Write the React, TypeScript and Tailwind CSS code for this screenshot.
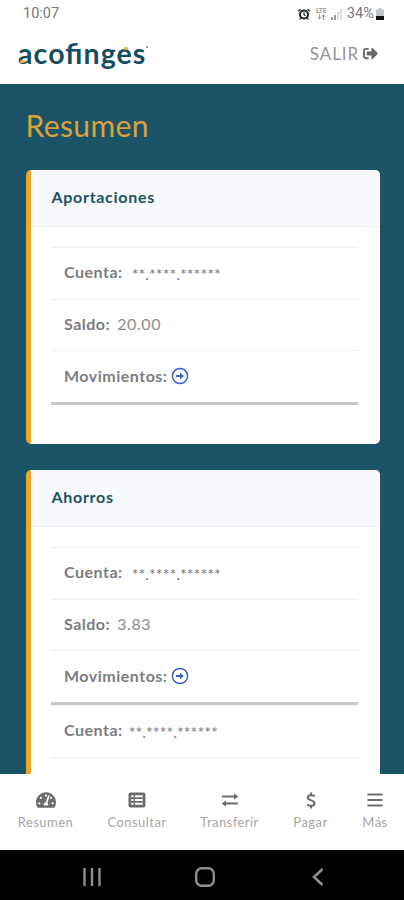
import type { ReactNode } from "react";
import { FaSignOutAlt, FaTachometerAlt } from "react-icons/fa";

type Item = { cuenta: string; saldo?: string };

const accounts: { title: string; items: Item[] }[] = [
  {
    title: "Aportaciones",
    items: [{ cuenta: "**.****.******", saldo: "20.00" }],
  },
  {
    title: "Ahorros",
    items: [{ cuenta: "**.****.******", saldo: "3.83" }, { cuenta: "**.****.******" }],
  },
];

const tabs = [
  { label: "Resumen", width: "w-[57px]", icon: <FaTachometerAlt className="w-5 h-[18px]" /> },
  { label: "Consultar", width: "w-[59px]", icon: <ListIcon /> },
  { label: "Transferir", width: "w-[59px]", icon: <ExchangeIcon /> },
  { label: "Pagar", width: "w-[36px]", icon: <DollarIcon /> },
  { label: "Más", width: "w-[26px]", icon: <MenuIcon /> },
];

function ListIcon() {
  return (
    <svg viewBox="0 0 18 16" className="w-[18px] h-4">
      <rect x="0.5" y="0.5" width="17" height="15" rx="2" fill="currentColor" />
      <path d="M3.2 4.2h2.4M3.2 8h2.4M3.2 11.8h2.4M7 4.2h7.8M7 8h7.8M7 11.8h7.8" stroke="#fff" strokeWidth="2" />
    </svg>
  );
}

function ExchangeIcon() {
  return (
    <svg viewBox="0 0 18 16" className="w-[18px] h-4" fill="none" stroke="currentColor" strokeWidth="1.9">
      <path d="M1 4.5h13M17 11.5H4" />
      <path d="M13 1.2v6.6l4.2-3.3zM5 8.2v6.6L.8 11.5z" fill="currentColor" stroke="none" />
    </svg>
  );
}

function DollarIcon() {
  return (
    <svg viewBox="0 0 10 17" className="w-2.5 h-[17px]" fill="none" stroke="currentColor" strokeWidth="2">
      <path d="M5 .5v3M5 13.5v3" />
      <path d="M8.7 4.2C7.6 3.5 6.3 3.2 5 3.2c-1.9 0-3.2.9-3.2 2.4C1.8 9 8.6 7.8 8.6 11.3c0 1.5-1.4 2.5-3.5 2.5-1.5 0-2.9-.4-4-1.2" />
    </svg>
  );
}

function MenuIcon() {
  return (
    <svg viewBox="0 0 16 14" className="w-4 h-3.5" stroke="currentColor" strokeWidth="2">
      <path d="M.5 1.5h15M.5 7h15M.5 12.5h15" />
    </svg>
  );
}

function ArrowCircle() {
  return (
    <svg viewBox="0 0 18 18" className="w-[18px] h-[18px] text-[#3c62cc]" fill="none" stroke="currentColor" strokeWidth="1.5">
      <circle cx="9" cy="9" r="7.6" />
      <path d="M5 9h5" strokeWidth="2" />
      <path d="M9 5.6v6.8L12.8 9z" fill="currentColor" stroke="none" />
    </svg>
  );
}

function StatusBar() {
  return (
    <div className="h-[26px] pt-0.5 pl-[23px] pr-[20px] flex items-center justify-between text-[#777]">
      <span className="text-[14.5px] font-['Roboto',sans-serif]">10:07</span>
      <div className="flex items-center">
        <svg viewBox="0 0 14 12" className="w-[14px] h-3 mr-1 text-[#222]" fill="none" stroke="currentColor">
          <circle cx="7" cy="6.5" r="4" strokeWidth="2" />
          <path d="M7 4.3v2.4l1.5 1M1.2 3.2l2.3-2M12.8 3.2l-2.3-2M3.8 10l-1.2 1.4M10.2 10l1.2 1.4" strokeWidth="1.3" />
        </svg>
        <div className="w-[13px] mr-[3px] flex flex-col items-center text-[#999]">
          <span className="text-[6.5px] leading-[6px] font-bold font-['Roboto',sans-serif]">LTE</span>
          <svg viewBox="0 0 9 6" className="w-[9px] h-1.5" fill="none" stroke="currentColor">
            <path d="M2.5 0v5M.8 3.2l1.7 2 1.7-2M6.5 6V1M4.8 2.8l1.7-2 1.7 2" />
          </svg>
        </div>
        <svg viewBox="0 0 12 11" className="w-3 h-[11px] mr-1">
          <path d="M0 8h2v3H0zM3 6h2v5H3z" fill="#9a9a9a" />
          <path d="M6 3h2v8H6zM9 0h2v11H9z" fill="#dcdcdc" />
        </svg>
        <span className="text-[14.5px] tracking-[0.1px] font-['Roboto',sans-serif]">34%</span>
        <svg viewBox="0 0 8 12" className="w-2 h-3 ml-0.5">
          <path d="M2.5 0h3v1.5H8V8H0V1.5h2.5z" fill="#c4c4c4" />
          <path d="M0 8h8v4H0z" fill="#111" />
        </svg>
      </div>
    </div>
  );
}

function Header() {
  return (
    <header className="h-[58px] pl-[18px] pr-[26px] pb-[3px] flex items-center justify-between">
      <div className="relative h-9 pb-0.5 flex items-center text-[#174d60]">
        <span className="text-[28.5px] leading-9 font-bold tracking-[1.1px] [font-feature-settings:'liga'_1]">acofinges</span>
        <span className="absolute left-[2px] top-[24px] w-[5px] h-[3px] rounded-full bg-[#e9b04b]" />
        <span className="absolute left-[106px] top-[11px] w-1 h-[3px] rounded-full bg-[#e9b04b]" />
        <span className="absolute left-[128px] top-[10px] w-0.5 h-0.5 rounded-full bg-[#5f8290]" />
      </div>
      <div className="flex items-center gap-1 text-[#939393]">
        <span className="text-[17px] tracking-[0.9px]">SALIR</span>
        <FaSignOutAlt className="w-[15px] h-[15px] text-[#666]" />
      </div>
    </header>
  );
}

function Row({ label, children }: { label: string; children?: ReactNode }) {
  return (
    <div className="h-[51.7px] pl-[13px] pb-0.5 border-t border-[#eeeff1] flex items-center text-base">
      <span className="font-bold text-[#7c7c82] tracking-[0.5px]">{label}</span>
      {children}
    </div>
  );
}

function AccountItem({ item, gap }: { item: Item; gap: string }) {
  return (
    <div className="border-b-[3px] border-[#c8c8c8]">
      <Row label="Cuenta:">
        <span className={`${gap} pt-[3px] text-[#77777d]`}>{item.cuenta}</span>
      </Row>
      {item.saldo ? (
        <>
          <Row label="Saldo:">
            <span className="ml-[7px] text-[#8d8d92] tracking-[0.6px]">{item.saldo}</span>
          </Row>
          <Row label="Movimientos:">
            <span className="ml-1">
              <ArrowCircle />
            </span>
          </Row>
        </>
      ) : (
        <div className="h-[52px] border-t border-[#eeeff1]" />
      )}
    </div>
  );
}

function AccountCard({ account }: { account: (typeof accounts)[number] }) {
  return (
    <section className="shrink-0 rounded-[5px] border-l-[5px] border-[#eca52f] bg-white overflow-hidden">
      <h2 className="h-[57px] pl-[21px] pb-0.5 flex items-center border-b border-[#eff0f5] bg-[#f8f9fd] text-base font-bold tracking-[0.7px] text-[#205260]">
        {account.title}
      </h2>
      <div className="pt-5 pb-[39px] pl-[20.5px] pr-[22px]">
        {account.items.map((item, index) => (
          <AccountItem key={index} item={item} gap={index === 0 ? "ml-[9px]" : "ml-[6px]"} />
        ))}
      </div>
    </section>
  );
}

export default function App() {
  return (
    <div className="w-[404px] h-[900px] flex flex-col overflow-hidden bg-white font-['Lato','Open_Sans',sans-serif]">
      <StatusBar />
      <Header />
      <main className="h-[690px] pl-[25.5px] pr-6 flex flex-col overflow-hidden bg-[#1b5466]">
        <h1 className="h-[86px] pb-[3px] shrink-0 flex items-center text-[30px] tracking-[0.4px] text-[#dda13c]">Resumen</h1>
        <div className="flex flex-col gap-[26px]">
          {accounts.map((account) => (
            <AccountCard key={account.title} account={account} />
          ))}
        </div>
      </main>
      <nav className="h-[76px] pl-[17px] pr-4 pt-[17px] flex justify-between text-[#6c6c6c]">
        {tabs.map((tab) => (
          <div key={tab.label} className={`${tab.width} flex flex-col items-center`}>
            <div className="h-[18px] flex items-center">{tab.icon}</div>
            <span className="mt-1 text-[13px] leading-[18px] text-[#a6a6a6] tracking-[0.45px]">{tab.label}</span>
          </div>
        ))}
      </nav>
      <div className="h-[50px] pl-[83px] pr-[80px] pt-[3px] flex items-center bg-black text-[#8f8f8f]">
        <svg viewBox="0 0 18 18" className="w-[18px] h-[18px]" stroke="currentColor" strokeWidth="2.4">
          <path d="M1.5 0v18M9 0v18M16.5 0v18" />
        </svg>
        <svg viewBox="0 0 20 20" className="w-5 h-5 ml-[94px]" fill="none" stroke="currentColor" strokeWidth="2.4">
          <rect x="1.2" y="1.2" width="17.6" height="17.6" rx="5.5" />
        </svg>
        <svg viewBox="0 0 12 18" className="w-3 h-[18px] ml-auto" fill="none" stroke="currentColor" strokeWidth="2.6">
          <path d="M10.5 1 2 9l8.5 8" />
        </svg>
      </div>
    </div>
  );
}
